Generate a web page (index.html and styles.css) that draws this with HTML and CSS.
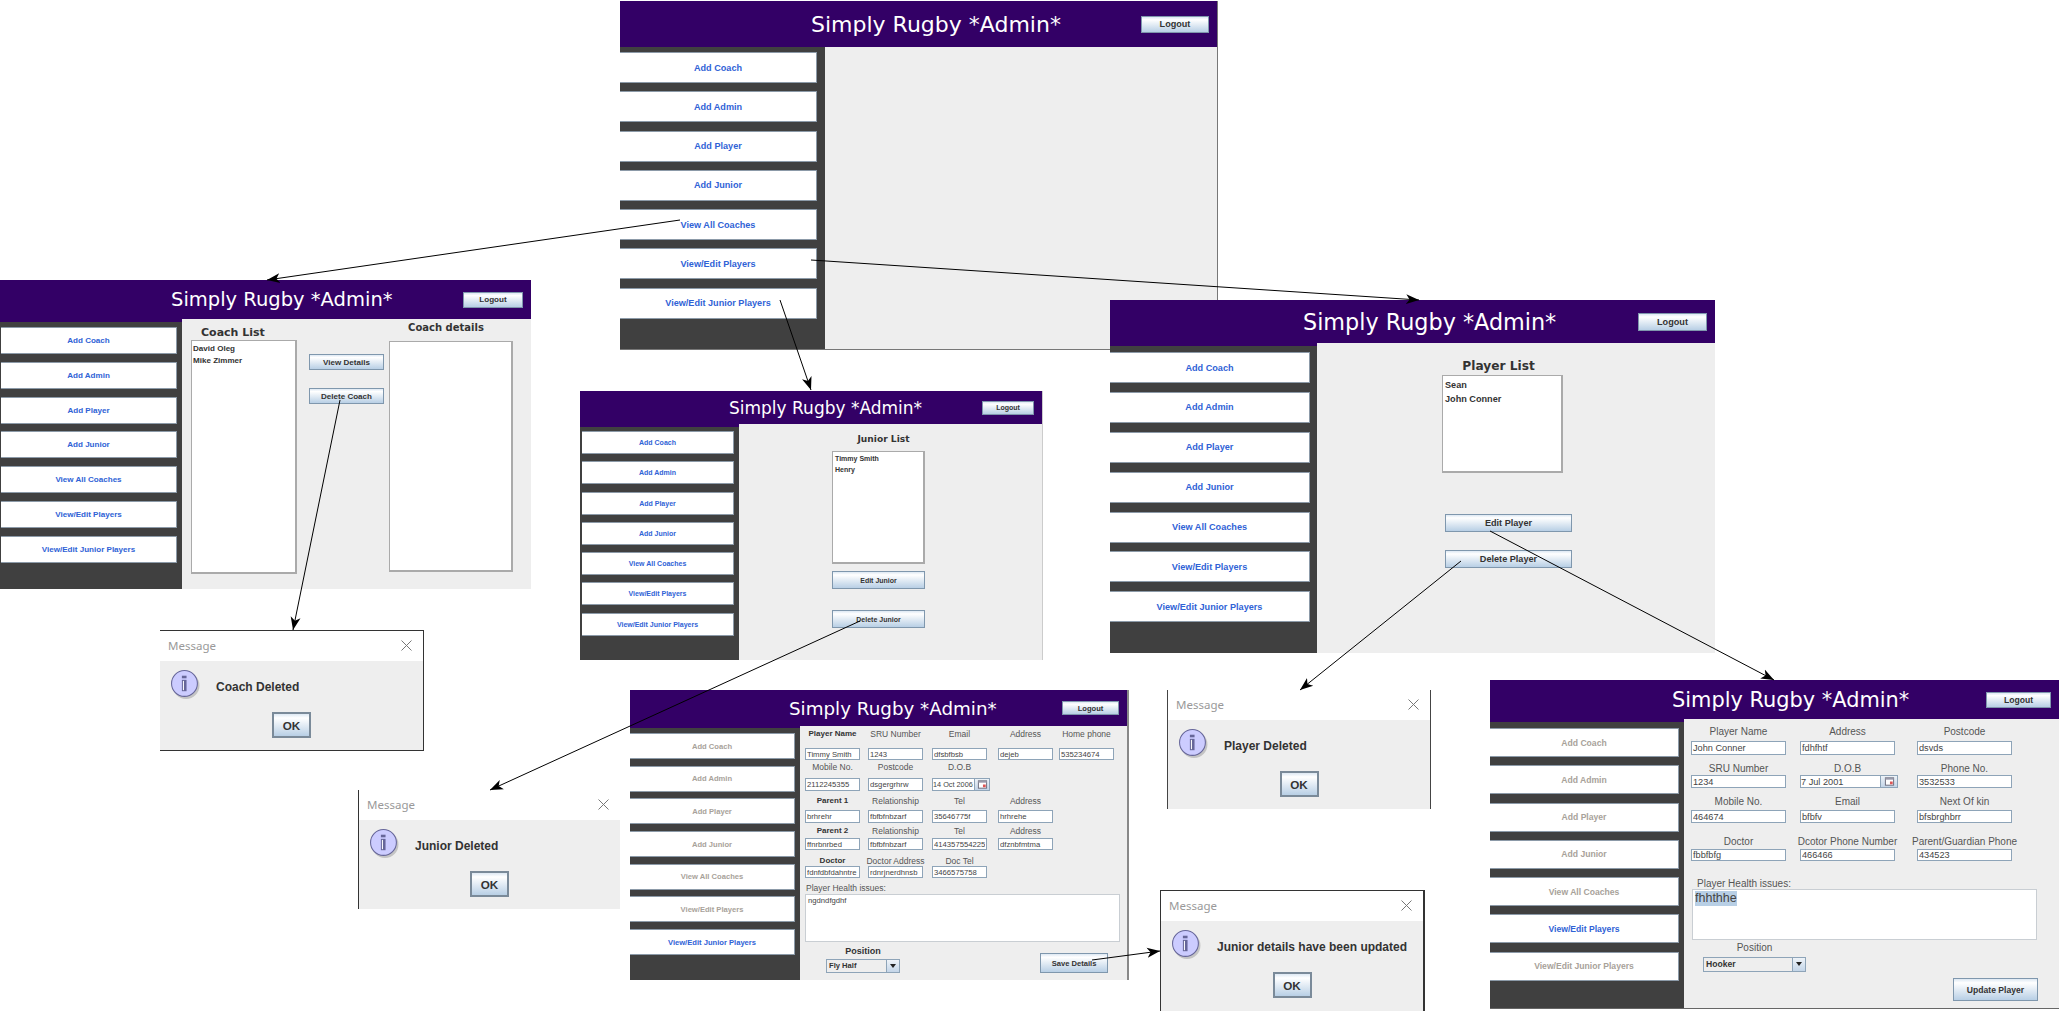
FILE: index.html
```html
<!DOCTYPE html>
<html>
<head>
  <title>Simply Rugby Admin - screen flow</title>
  <link rel="stylesheet" href="styles.css">
</head>
<body>

  <!-- Main admin screen -->
  <div class="win win-main">
    <div class="head"><span class="title">Simply Rugby *Admin*</span><button class="btn logout">Logout</button></div>
    <div class="body">
      <div class="side">
        <div class="nav">Add Coach</div>
        <div class="nav">Add Admin</div>
        <div class="nav">Add Player</div>
        <div class="nav">Add Junior</div>
        <div class="nav">View All Coaches</div>
        <div class="nav">View/Edit Players</div>
        <div class="nav">View/Edit Junior Players</div>
      </div>
      <div class="panel"></div>
    </div>
  </div>

  <!-- Coach list -->
  <div class="win win-coach">
    <div class="head"><span class="title">Simply Rugby *Admin*</span><button class="btn logout">Logout</button></div>
    <div class="body">
      <div class="side">
        <div class="nav">Add Coach</div>
        <div class="nav">Add Admin</div>
        <div class="nav">Add Player</div>
        <div class="nav">Add Junior</div>
        <div class="nav">View All Coaches</div>
        <div class="nav">View/Edit Players</div>
        <div class="nav">View/Edit Junior Players</div>
      </div>
      <div class="panel coach-panel">
        <div class="coach-list">
          <h3>Coach List</h3>
          <ul class="list">
            <li>David Oleg</li>
            <li>Mike Zimmer</li>
          </ul>
        </div>
        <div class="coach-actions">
          <button class="btn">View Details</button>
          <button class="btn">Delete Coach</button>
        </div>
        <div class="coach-details">
          <h3>Coach details</h3>
          <div class="list"></div>
        </div>
      </div>
    </div>
  </div>

  <!-- Player list -->
  <div class="win win-player">
    <div class="head"><span class="title">Simply Rugby *Admin*</span><button class="btn logout">Logout</button></div>
    <div class="body">
      <div class="side">
        <div class="nav">Add Coach</div>
        <div class="nav">Add Admin</div>
        <div class="nav">Add Player</div>
        <div class="nav">Add Junior</div>
        <div class="nav">View All Coaches</div>
        <div class="nav">View/Edit Players</div>
        <div class="nav">View/Edit Junior Players</div>
      </div>
      <div class="panel">
        <div class="list-col">
          <h3>Player List</h3>
          <ul class="list">
            <li>Sean</li>
            <li>John Conner</li>
          </ul>
          <button class="btn btn-edit">Edit Player</button>
          <button class="btn btn-del">Delete Player</button>
        </div>
      </div>
    </div>
  </div>

  <!-- Junior list -->
  <div class="win win-junior">
    <div class="head"><span class="title">Simply Rugby *Admin*</span><button class="btn logout">Logout</button></div>
    <div class="body">
      <div class="side">
        <div class="nav">Add Coach</div>
        <div class="nav">Add Admin</div>
        <div class="nav">Add Player</div>
        <div class="nav">Add Junior</div>
        <div class="nav">View All Coaches</div>
        <div class="nav">View/Edit Players</div>
        <div class="nav">View/Edit Junior Players</div>
      </div>
      <div class="panel">
        <div class="list-col">
          <h3>Junior List</h3>
          <ul class="list">
            <li>Timmy Smith</li>
            <li>Henry</li>
          </ul>
          <button class="btn btn-edit">Edit Junior</button>
          <button class="btn btn-del">Delete Junior</button>
        </div>
      </div>
    </div>
  </div>

  <!-- Edit junior form -->
  <div class="win win-edit-junior">
    <div class="head"><span class="title">Simply Rugby *Admin*</span><button class="btn logout">Logout</button></div>
    <div class="body">
      <div class="side">
        <div class="nav off">Add Coach</div>
        <div class="nav off">Add Admin</div>
        <div class="nav off">Add Player</div>
        <div class="nav off">Add Junior</div>
        <div class="nav off">View All Coaches</div>
        <div class="nav off">View/Edit Players</div>
        <div class="nav">View/Edit Junior Players</div>
      </div>
      <div class="panel form">
        <div class="row lbl mt1"><b>Player Name</b><span>SRU Number</span><span>Email</span><span>Address</span><span>Home phone</span></div>
        <div class="row mt7 h12"><input value="Timmy Smith"><input value="1243"><input value="dfsbfbsb"><input value="dejeb"><input value="535234674"></div>
        <div class="row lbl"><span>Mobile No.</span><span>Postcode</span><span>D.O.B</span></div>
        <div class="row mt4 h12">
          <input value="2112245355"><input value="dsgergrhrw">
          <div class="date"><input value="14 Oct 2006"><span class="cal"><svg viewBox="0 0 12 12"><rect x="1.5" y="2" width="9" height="8" fill="#fff" stroke="#667"/><rect x="1.5" y="2" width="9" height="2" fill="#99a"/><rect x="6.5" y="6" width="3" height="3" fill="#d55"/></svg></span></div>
        </div>
        <div class="row lbl mt4"><b>Parent 1</b><span>Relationship</span><span>Tel</span><span>Address</span></div>
        <div class="row mt2 h13"><input value="brhrehr"><input value="fbfbfnbzarf"><input value="35646775f"><input value="hrhrehe"></div>
        <div class="row lbl mt1"><b>Parent 2</b><span>Relationship</span><span>Tel</span><span>Address</span></div>
        <div class="row h12"><input value="ffnrbnrbed"><input value="fbfbfnbzarf"><input value="414357554225"><input value="dfznbfmtma"></div>
        <div class="row lbl mt4"><b>Doctor</b><span>Doctor Address</span><span>Doc Tel</span></div>
        <div class="row mtn2 h12"><input value="fdnfdbfdahntre"><input value="rdnrjnerdhnsb"><input value="3466575758"></div>
        <div class="health-label mt3">Player Health issues:</div>
        <textarea class="health mtn1">ngdndfgdhf</textarea>
        <div class="form-foot mt2">
          <div class="pos">
            <b>Position</b>
            <div class="combo"><span class="combo-val">Fly Half</span><span class="combo-arrow"></span></div>
          </div>
          <button class="btn save">Save Details</button>
        </div>
      </div>
    </div>
  </div>

  <!-- Edit player form -->
  <div class="win win-edit-player">
    <div class="head"><span class="title">Simply Rugby *Admin*</span><button class="btn logout">Logout</button></div>
    <div class="body">
      <div class="side">
        <div class="nav off">Add Coach</div>
        <div class="nav off">Add Admin</div>
        <div class="nav off">Add Player</div>
        <div class="nav off">Add Junior</div>
        <div class="nav off">View All Coaches</div>
        <div class="nav">View/Edit Players</div>
        <div class="nav off">View/Edit Junior Players</div>
      </div>
      <div class="panel form">
        <div class="row lbl mt6"><span>Player Name</span><span>Address</span><span>Postcode</span></div>
        <div class="row mt2 h14"><input value="John Conner"><input value="fdhfhtf"><input value="dsvds"></div>
        <div class="row lbl mt7"><span>SRU Number</span><span>D.O.B</span><span>Phone No.</span></div>
        <div class="row mtn1 h13">
          <input value="1234">
          <div class="date"><input value="7 Jul 2001"><span class="cal"><svg viewBox="0 0 12 12"><rect x="1.5" y="2" width="9" height="8" fill="#fff" stroke="#667"/><rect x="1.5" y="2" width="9" height="2" fill="#99a"/><rect x="6.5" y="6" width="3" height="3" fill="#d55"/></svg></span></div>
          <input value="3532533">
        </div>
        <div class="row lbl mt7"><span>Mobile No.</span><span>Email</span><span>Next Of kin</span></div>
        <div class="row mt1 h13"><input value="464674"><input value="bfbfv"><input value="bfsbrghbrr"></div>
        <div class="row lbl mt12"><span>Doctor</span><span>Dcotor Phone Number</span><span>Parent/Guardian Phone</span></div>
        <div class="row h12"><input value="fbbfbfg"><input value="466466"><input value="434523"></div>
        <div class="health-label mt16">Player Health issues:</div>
        <div class="health mtn2"><span class="selected">fhhthhe</span></div>
        <div class="form-foot mt1">
          <div class="pos">
            <span>Position</span>
            <div class="combo"><span class="combo-val">Hooker</span><span class="combo-arrow"></span></div>
          </div>
          <button class="btn save">Update Player</button>
        </div>
      </div>
    </div>
  </div>

  <!-- Message dialogs -->
  <div class="dialog dlg-coach">
    <div class="dlg-bar"><span>Message</span><svg class="dlg-x" viewBox="0 0 11 11"><path d="M0.5 0.5L10.5 10.5M10.5 0.5L0.5 10.5"/></svg></div>
    <div class="dlg-body">
      <div class="dlg-msg">
        <svg class="info" viewBox="0 0 30 30"><circle cx="15.5" cy="16" r="13" fill="#999" opacity="0.5"/><circle cx="14" cy="14" r="12.5" fill="#ccccff" stroke="#666699"/><rect x="11.5" y="10.5" width="4.5" height="11" fill="#666699"/><rect x="11.5" y="6.5" width="4.5" height="2.5" fill="#666699"/><rect x="12.5" y="11.5" width="1" height="9" fill="#fff"/></svg>
        <span>Coach Deleted</span>
      </div>
      <button class="btn ok">OK</button>
    </div>
  </div>

  <div class="dialog dlg-junior">
    <div class="dlg-bar"><span>Message</span><svg class="dlg-x" viewBox="0 0 11 11"><path d="M0.5 0.5L10.5 10.5M10.5 0.5L0.5 10.5"/></svg></div>
    <div class="dlg-body">
      <div class="dlg-msg">
        <svg class="info" viewBox="0 0 30 30"><circle cx="15.5" cy="16" r="13" fill="#999" opacity="0.5"/><circle cx="14" cy="14" r="12.5" fill="#ccccff" stroke="#666699"/><rect x="11.5" y="10.5" width="4.5" height="11" fill="#666699"/><rect x="11.5" y="6.5" width="4.5" height="2.5" fill="#666699"/><rect x="12.5" y="11.5" width="1" height="9" fill="#fff"/></svg>
        <span>Junior Deleted</span>
      </div>
      <button class="btn ok">OK</button>
    </div>
  </div>

  <div class="dialog dlg-player">
    <div class="dlg-bar"><span>Message</span><svg class="dlg-x" viewBox="0 0 11 11"><path d="M0.5 0.5L10.5 10.5M10.5 0.5L0.5 10.5"/></svg></div>
    <div class="dlg-body">
      <div class="dlg-msg">
        <svg class="info" viewBox="0 0 30 30"><circle cx="15.5" cy="16" r="13" fill="#999" opacity="0.5"/><circle cx="14" cy="14" r="12.5" fill="#ccccff" stroke="#666699"/><rect x="11.5" y="10.5" width="4.5" height="11" fill="#666699"/><rect x="11.5" y="6.5" width="4.5" height="2.5" fill="#666699"/><rect x="12.5" y="11.5" width="1" height="9" fill="#fff"/></svg>
        <span>Player Deleted</span>
      </div>
      <button class="btn ok">OK</button>
    </div>
  </div>

  <div class="dialog dlg-updated">
    <div class="dlg-bar"><span>Message</span><svg class="dlg-x" viewBox="0 0 11 11"><path d="M0.5 0.5L10.5 10.5M10.5 0.5L0.5 10.5"/></svg></div>
    <div class="dlg-body">
      <div class="dlg-msg">
        <svg class="info" viewBox="0 0 30 30"><circle cx="15.5" cy="16" r="13" fill="#999" opacity="0.5"/><circle cx="14" cy="14" r="12.5" fill="#ccccff" stroke="#666699"/><rect x="11.5" y="10.5" width="4.5" height="11" fill="#666699"/><rect x="11.5" y="6.5" width="4.5" height="2.5" fill="#666699"/><rect x="12.5" y="11.5" width="1" height="9" fill="#fff"/></svg>
        <span>Junior details have been updated</span>
      </div>
      <button class="btn ok">OK</button>
    </div>
  </div>

  <!-- Flow arrows -->
  <svg class="arrows" viewBox="0 0 2059 1011">
    <defs>
      <marker id="head" markerUnits="userSpaceOnUse" markerWidth="14" markerHeight="12" refX="13" refY="6" orient="auto">
        <path d="M0 1L13 6L0 11L3.5 6z" fill="#000"/>
      </marker>
    </defs>
    <line x1="680" y1="220" x2="267" y2="280" marker-end="url(#head)"/>
    <line x1="811" y1="260" x2="1419" y2="300" marker-end="url(#head)"/>
    <line x1="780" y1="300" x2="811" y2="390" marker-end="url(#head)"/>
    <line x1="340" y1="400" x2="293" y2="630" marker-end="url(#head)"/>
    <line x1="860" y1="621" x2="490" y2="790" marker-end="url(#head)"/>
    <line x1="1461" y1="561" x2="1300" y2="690" marker-end="url(#head)"/>
    <line x1="1490" y1="531" x2="1774" y2="680" marker-end="url(#head)"/>
    <line x1="1092" y1="960" x2="1160" y2="951" marker-end="url(#head)"/>
  </svg>

</body>
</html>
```

FILE: styles.css
```css
* {
  box-sizing: border-box;
}

body {
  margin: 0;
  width: 2059px;
  height: 1011px;
  position: relative;
  overflow: hidden;
  background-color: #fff;
  font-family: "Liberation Sans", Arial, sans-serif;
  color: #333;
}

/* Windows sit on a free canvas, each sets its own scale */
.win {
  position: absolute;
  display: flex;
  flex-direction: column;
  overflow: hidden;
  background-color: #eee;
  font-size: var(--ui);
}

.win-main {
  left: 620px; top: 1px; width: 598px; height: 349px;
  --ui: 9.1px; --head-h: 46px; --title-size: 22px; --title-x: 191px;
  --logout-w: 68px; --logout-h: 17px;
  --side-w: 205px; --side-r: 8px; --lip: 0px; --pad: 5px; --nav-h: 31px; --nav-gap: 8.3px;
  border-right: 1px solid #777;
  border-bottom: 1px solid #777;
}

.win-coach {
  left: 0; top: 280px; width: 531px; height: 309px;
  --ui: 8.05px; --head-h: 39px; --title-size: 19.5px; --title-x: 171px;
  --logout-w: 60px; --logout-h: 16px;
  --side-w: 182px; --side-l: 1px; --side-r: 5px; --lip: 3px; --pad: 5px; --nav-h: 27px; --nav-gap: 7.8px;
}

.win-player {
  left: 1110px; top: 300px; width: 605px; height: 353px;
  --ui: 9.15px; --head-h: 43px; --title-size: 22.3px; --title-x: 193px;
  --logout-w: 69px; --logout-h: 18px;
  --side-w: 207px; --side-r: 7px; --lip: 3px; --pad: 6px; --nav-h: 31px; --nav-gap: 8.9px;
  --col-left: 125px; --col-w: 130px; --list-w: 121px; --list-h: 98px;
  --heading: 12.2px; --heading-h: 17px; --heading-top: 15px; --heading-shift: -4px;
  --item-h: 14px; --edit-top: 41px; --del-top: 18px; --btn-h: 18px; --btn-left: 3px;
}

.win-junior {
  left: 580px; top: 391px; width: 463px; height: 269px;
  --ui: 7px; --head-h: 33px; --title-size: 17px; --title-x: 149px;
  --logout-w: 52px; --logout-h: 14px;
  --side-w: 159px; --side-l: 2px; --side-r: 5px; --lip: 3px; --pad: 4px; --nav-h: 23px; --nav-gap: 7.3px;
  --col-left: 93px; --col-w: 93px; --list-w: 93px; --list-h: 113px;
  --heading: 9.1px; --heading-h: 12px; --heading-top: 9px; --heading-shift: 5px; --heading-gap: 6px;
  --item-h: 10.7px; --edit-top: 7px; --del-top: 21px; --btn-h: 18px; --btn-left: 0px;
  border-right: 1px solid #ccc;
}

.win-edit-junior {
  left: 630px; top: 690px; width: 499px; height: 290px;
  --ui: 7.6px; --head-h: 36px; --title-size: 18.3px; --title-x: 159px;
  --logout-w: 57px; --logout-h: 14px;
  --side-w: 170px; --side-r: 5px; --lip: 2px; --pad: 5px; --nav-h: 26px; --nav-gap: 6.7px;
  --lbl: 8.5px; --lbl-b: 8px; --field: 7.7px; --form-left: 5px;
  --cols: 63px 64px 66px 61px 55px; --cells: 55px;
  --health-w: 315px; --health-h: 48px; --pos-left: 21px; --pos-w: 74px; --combo-h: 14px;
  --save-left: 140px; --save-top: 9px; --save-w: 68px; --save-h: 20px; --cal-w: 15px; --pos-gap: 1px;
  border-right: 2px solid #888;
}

.win-edit-player {
  left: 1490px; top: 680px; width: 569px; height: 329px;
  --ui: 8.6px; --head-h: 39px; --title-size: 20.9px; --title-x: 182px;
  --logout-w: 65px; --logout-h: 16px;
  --side-w: 194px; --side-r: 5px; --lip: 3px; --pad: 6px; --nav-h: 29px; --nav-gap: 8.3px;
  --lbl: 10px; --lbl-b: 10px; --field: 9.2px; --form-left: 7px;
  --cols: 109px 117px 95px; --cells: 95px;
  --health-w: 345px; --health-h: 51px; --pos-left: 12px; --pos-w: 103px; --combo-h: 15px;
  --save-left: 147px; --save-top: 37px; --save-w: 85px; --save-h: 23px; --cal-w: 17px; --pos-gap: 2px;
  border-bottom: 1px solid #666;
}

/* Header */
.head {
  flex: none;
  height: var(--head-h);
  display: flex;
  align-items: center;
  background-color: #330066;
}

.title {
  margin-left: var(--title-x);
  font-family: "DejaVu Sans", sans-serif;
  font-size: var(--title-size);
  color: #fff;
  white-space: nowrap;
}

/* Java metal style button */
.btn {
  display: block;
  padding: 0;
  border: 1px solid #7f97ad;
  background: linear-gradient(#dde8f3, #fff 18%, #b8cfe5);
  font-family: "Liberation Sans", Arial, sans-serif;
  font-size: var(--ui);
  font-weight: bold;
  color: #333;
  white-space: nowrap;
}

.logout {
  flex: none;
  margin-left: auto;
  margin-right: 8px;
  width: var(--logout-w);
  height: var(--logout-h);
}

.body {
  flex: 1;
  display: flex;
  min-height: 0;
}

/* Sidebar */
.side {
  flex: none;
  width: var(--side-w);
  display: flex;
  flex-direction: column;
  gap: var(--nav-gap);
  padding: var(--pad) var(--side-r) 0 var(--side-l, 0);
  background-color: #404040;
  border-top: var(--lip) solid #330066;
}

.nav {
  flex: none;
  height: var(--nav-h);
  display: flex;
  align-items: center;
  justify-content: center;
  background-color: #fff;
  border: 1px solid #8c9aa8;
  border-left: none;
  font-weight: bold;
  color: #2f62d6;
}

.nav.off {
  color: #a8a29a;
}

.panel {
  flex: 1;
  min-width: 0;
}

h3 {
  margin: 0;
  font-family: "DejaVu Sans", sans-serif;
  font-weight: bold;
  color: #333;
  white-space: nowrap;
}

.list {
  margin: 0;
  padding: 2px 2px;
  list-style: none;
  background-color: #fff;
  border: 1px solid #aaa;
  border-right-width: 2px;
  border-bottom-width: 2px;
  font-weight: bold;
}

/* Coach screen */
.coach-panel {
  display: flex;
  align-items: flex-start;
}

.coach-list {
  margin: 6px 0 0 9px;
  width: 106px;
}

.coach-list h3 {
  height: 15px;
  line-height: 15px;
  padding-left: 10px;
  font-size: 11px;
}

.coach-list .list {
  height: 234px;
  line-height: 12px;
  padding-left: 1px;
}

.coach-actions {
  margin: 35px 0 0 12px;
  width: 75px;
  display: flex;
  flex-direction: column;
  gap: 18px;
}

.coach-actions .btn {
  height: 16px;
}

.coach-details {
  margin: 1px 0 0 5px;
  width: 124px;
}

.coach-details h3 {
  height: 15px;
  line-height: 15px;
  padding-right: 10px;
  margin-bottom: 6px;
  text-align: center;
  font-size: 10px;
}

.coach-details .list {
  height: 231px;
}

/* Player and junior list screens */
.list-col {
  margin-left: var(--col-left);
  width: var(--col-w);
  padding-top: var(--heading-top);
}

.list-col h3 {
  width: var(--list-w);
  height: var(--heading-h);
  position: relative;
  left: var(--heading-shift);
  line-height: var(--heading-h);
  text-align: center;
  font-size: var(--heading);
}

.list-col .list {
  width: var(--list-w);
  height: var(--list-h);
  margin-top: var(--heading-gap, 0);
  line-height: var(--item-h);
}

.btn-edit,
.btn-del {
  width: calc(var(--col-w) - var(--btn-left));
  height: var(--btn-h);
  margin-left: var(--btn-left);
}

.btn-edit {
  margin-top: var(--edit-top);
}

.btn-del {
  margin-top: var(--del-top);
}

/* Edit forms */
.form {
  padding-left: var(--form-left);
  color: #555;
}

.row {
  display: grid;
  grid-template-columns: var(--cols);
}

.row input,
.row .date {
  width: var(--cells);
}

.row.lbl {
  height: 14px;
  line-height: 14px;
  font-size: var(--lbl);
}

.row.lbl > * {
  width: var(--cells);
  display: flex;
  justify-content: center;
  white-space: nowrap;
}

.row.lbl b {
  font-size: var(--lbl-b);
  color: #333;
}

.h12 { height: 12px; }
.h13 { height: 13px; }
.h14 { height: 14px; }

.mt1 { margin-top: 1px; }
.mt2 { margin-top: 2px; }
.mt3 { margin-top: 3px; }
.mt4 { margin-top: 4px; }
.mt6 { margin-top: 6px; }
.mt7 { margin-top: 7px; }
.mt12 { margin-top: 12px; }
.mt16 { margin-top: 16px; }
.mtn1 { margin-top: -1px; }
.mtn2 { margin-top: -2px; }

input {
  display: block;
  height: 100%;
  padding: 0 1px;
  border: 1px solid #8ea4b8;
  background-color: #fff;
  font-family: "Liberation Sans", Arial, sans-serif;
  font-size: var(--field);
  color: #444;
}

.date {
  display: flex;
  height: 100%;
}

.row .date {
  width: calc(var(--cells) + 3px);
}

.row .date input {
  flex: 1;
  width: auto;
  min-width: 0;
  padding: 0;
}

.win-edit-junior .date input {
  font-size: 7.3px;
}

.cal {
  flex: none;
  width: var(--cal-w);
  display: flex;
  align-items: center;
  justify-content: center;
  border: 1px solid #8ea4b8;
  border-left: none;
  background: linear-gradient(#eef3f8, #c3d5e8);
}

.cal svg {
  width: 11px;
  height: 11px;
}

.health-label {
  height: 14px;
  line-height: 14px;
  padding-left: 1px;
  font-size: var(--lbl);
}

.win-edit-player .health-label {
  padding-left: 6px;
}

.health {
  display: block;
  width: var(--health-w);
  height: var(--health-h);
  padding: 1px 2px;
  resize: none;
  overflow: hidden;
  border: 1px solid #c9ced3;
  background-color: #fff;
  font-family: "Liberation Sans", Arial, sans-serif;
  font-size: var(--field);
  color: #444;
}

.win-edit-player .health {
  margin-left: 1px;
  font-size: 12.5px;
  line-height: 15px;
}

.selected {
  display: inline-block;
  background-color: #b8cfe5;
}

.form-foot {
  display: flex;
  align-items: flex-start;
}

.pos {
  margin-left: var(--pos-left);
  width: var(--pos-w);
  text-align: center;
  font-size: var(--lbl);
  line-height: 14px;
}

.pos b {
  display: block;
  height: 14px;
  font-size: 9px;
  color: #333;
}

.pos > span {
  display: block;
  height: 14px;
}

.combo {
  display: flex;
  height: var(--combo-h);
  margin-top: var(--pos-gap);
  border: 1px solid #8ea4b8;
  background-color: #eee;
  text-align: left;
}

.combo-val {
  flex: 1;
  padding-left: 2px;
  line-height: calc(var(--combo-h) - 2px);
  font-size: var(--ui);
  font-weight: bold;
  color: #333;
}

.combo-arrow {
  flex: none;
  width: 13px;
  position: relative;
  border-left: 1px solid #8ea4b8;
  background: linear-gradient(#eef3f8, #c3d5e8);
}

.combo-arrow:after {
  content: "";
  position: absolute;
  left: 3px;
  top: 4px;
  border-left: 3.5px solid transparent;
  border-right: 3.5px solid transparent;
  border-top: 4px solid #222;
}

.save {
  flex: none;
  margin-left: var(--save-left);
  margin-top: var(--save-top);
  width: var(--save-w);
  height: var(--save-h);
}

/* Message dialogs */
.dialog {
  position: absolute;
  display: flex;
  flex-direction: column;
  background-color: #eee;
  --ui: 11.7px;
}

.dlg-coach {
  left: 160px; top: 630px; width: 264px; height: 121px;
  border-top: 1px solid #333;
  border-right: 1px solid #333;
  border-bottom: 1px solid #333;
}

.dlg-junior {
  left: 358px; top: 790px; width: 262px; height: 119px;
  border-left: 1px solid #333;
}

.dlg-player {
  left: 1167px; top: 690px; width: 264px; height: 119px;
  border-left: 1px solid #444;
  border-right: 1px solid #444;
}

.dlg-updated {
  left: 1160px; top: 890px; width: 265px; height: 121px;
  border-top: 1px solid #333;
  border-left: 1px solid #333;
  border-right: 2px solid #333;
}

.dlg-bar {
  flex: none;
  height: 30px;
  display: flex;
  align-items: center;
  justify-content: space-between;
  padding: 0 11px 2px 8px;
  background-color: #fff;
  font-family: "Noto Sans", sans-serif;
  font-size: 11.5px;
  color: #999;
}

.dlg-x {
  width: 11px;
  height: 11px;
}

.dlg-x path {
  fill: none;
  stroke: #777;
  stroke-width: 1;
}

.dlg-body {
  flex: 1;
  display: flex;
  flex-direction: column;
  align-items: center;
  padding-top: 10px;
}

.dlg-msg {
  align-self: stretch;
  display: flex;
  align-items: center;
  gap: 15px;
  padding-left: 10px;
  height: 26px;
  font-size: 12px;
  font-weight: bold;
  color: #333;
  white-space: nowrap;
}

.dlg-msg span {
  padding-top: 5px;
}

.info {
  flex: none;
  width: 31px;
  height: 31px;
}

.ok {
  margin-top: 15px;
  width: 39px;
  height: 26px;
  border: 2px solid #7a8a99;
}

/* Flow arrows drawn over everything */
.arrows {
  position: absolute;
  left: 0;
  top: 0;
  width: 2059px;
  height: 1011px;
  pointer-events: none;
}

.arrows line {
  stroke: #000;
  stroke-width: 1;
}
```
